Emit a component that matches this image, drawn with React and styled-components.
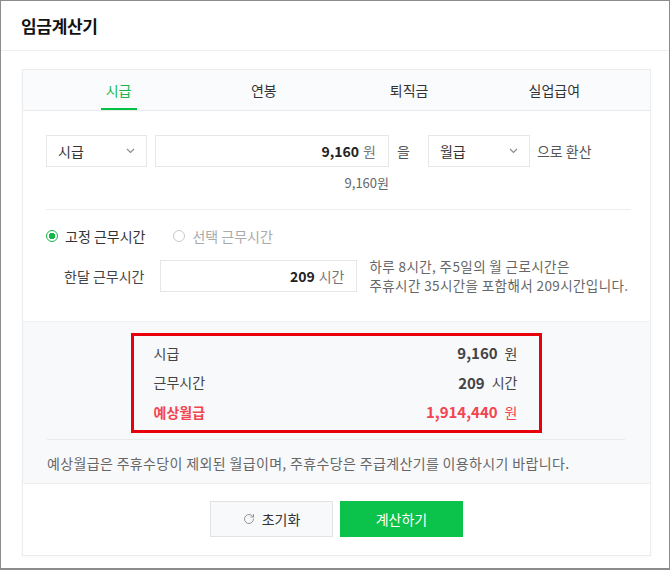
import styled, { createGlobalStyle } from "styled-components";
import { RotateCw } from "lucide-react";

const GlobalStyle = createGlobalStyle`
  * { box-sizing: border-box; }
  body {
    margin: 0;
    background: #ffffff;
    font-family: "Noto Sans CJK KR", "Noto Sans", sans-serif;
    color: #333;
  }
`;

const TABS = ["시급", "연봉", "퇴직금", "실업급여"];

const Chevron = () => (
  <svg width="9" height="6" viewBox="0 0 9 6">
    <path d="M1 1 L4.5 4.5 L8 1" fill="none" stroke="#8a8a8a" strokeWidth="1.1" />
  </svg>
);

export default function App() {
  return (
    <>
      <GlobalStyle />
      <Frame>
        <Header>임금계산기</Header>
        <Content>
          <Card>
            <TabBar>
              {TABS.map((t, i) => (
                <Tab key={t}>
                  <TabLabel $active={i === 0}>{t}</TabLabel>
                </Tab>
              ))}
            </TabBar>

            <FormSection>
              <Row>
                <Select $width={101}>
                  시급 <Chevron />
                </Select>
                <Field $width={234} $ml={8}>
                  <Num>9,160</Num>
                  <Unit>원</Unit>
                </Field>
                <Joiner $ml={8} $mr={18}>을</Joiner>
                <Select $width={102}>
                  월급 <Chevron />
                </Select>
                <Joiner $ml={7}>으로 환산</Joiner>
              </Row>
              <Converted>9,160원</Converted>
              <Divider />
              <RadioRow>
                <Radio $checked>
                  <Dot $checked />
                  고정 근무시간
                </Radio>
                <Radio>
                  <Dot />
                  선택 근무시간
                </Radio>
              </RadioRow>
              <HoursRow>
                <FieldLabel>한달 근무시간</FieldLabel>
                <Field $width={197} $ml={16}>
                  <Num>209</Num>
                  <Unit>시간</Unit>
                </Field>
                <Help>
                  하루 8시간, 주5일의 월 근로시간은
                  <br />
                  주휴시간 35시간을 포함해서 209시간입니다.
                </Help>
              </HoursRow>
            </FormSection>

            <ResultSection>
              <ResultBox>
                <ResultRow>
                  <span>시급</span>
                  <ResultValue>
                    <strong>9,160</strong>
                    <em>원</em>
                  </ResultValue>
                </ResultRow>
                <ResultRow>
                  <span>근무시간</span>
                  <ResultValue>
                    <strong>209</strong>
                    <em>시간</em>
                  </ResultValue>
                </ResultRow>
                <ResultRow $highlight>
                  <span>예상월급</span>
                  <ResultValue>
                    <strong>1,914,440</strong>
                    <em>원</em>
                  </ResultValue>
                </ResultRow>
              </ResultBox>
              <NoteLine />
              <Note>예상월급은 주휴수당이 제외된 월급이며, 주휴수당은 주급계산기를 이용하시기 바랍니다.</Note>
            </ResultSection>

            <Footer>
              <Button>
                <RotateCw size={12} color="#8a8a8a" strokeWidth={1.8} />
                초기화
              </Button>
              <Button $primary>계산하기</Button>
            </Footer>
          </Card>
        </Content>
      </Frame>
    </>
  );
}

const Frame = styled.div`
  width: 670px;
  height: 570px;
  border: 1px solid #8c8c8c;
  border-bottom-width: 2px;
  background: #fff;
`;

const Header = styled.div`
  height: 50px;
  border-bottom: 1px solid #efefef;
  padding-left: 20px;
  display: flex;
  align-items: center;
  font-size: 17px;
  font-weight: 700;
  color: #111;
  letter-spacing: -0.3px;
`;

const Content = styled.div`
  padding: 18px 18px 0 21px;
`;

const Card = styled.div`
  border: 1px solid #ececec;
  box-shadow: 0 1px 3px rgba(0, 0, 0, 0.03);
  background: #fff;
`;

const TabBar = styled.div`
  display: grid;
  grid-template-columns: repeat(4, 1fr);
  padding: 0 23px;
  height: 41px;
  background: #fafbfc;
  border-bottom: 1px solid #ebebeb;
`;

const Tab = styled.div`
  display: flex;
  justify-content: center;
`;

const TabLabel = styled.div`
  padding: 0 5px;
  height: 40px;
  line-height: 40px;
  font-size: 14px;
  color: ${(p) => (p.$active ? "#17b54b" : "#333")};
  border-bottom: 2px solid ${(p) => (p.$active ? "#06c244" : "transparent")};
`;

const FormSection = styled.div`
  padding: 24px 19px 26px 23px;
`;

const Row = styled.div`
  display: flex;
  align-items: center;
  height: 32px;
`;

const Select = styled.div`
  width: ${(p) => p.$width}px;
  height: 32px;
  border: 1px solid #e6e6e6;
  padding: 0 11px 0 11px;
  display: flex;
  align-items: center;
  justify-content: space-between;
  font-size: 14px;
  color: #333;
`;

const Field = styled.div`
  width: ${(p) => p.$width}px;
  margin-left: ${(p) => p.$ml || 0}px;
  flex-shrink: 0;
  height: 32px;
  border: 1px solid #e6e6e6;
  padding: 0 12px;
  display: flex;
  align-items: center;
  justify-content: flex-end;
  gap: 4px;
  font-size: 14px;
`;

const Num = styled.span`
  font-weight: 700;
  color: #222;
`;

const Unit = styled.span`
  color: #777;
`;

const Joiner = styled.span`
  margin-left: ${(p) => p.$ml || 0}px;
  margin-right: ${(p) => p.$mr || 0}px;
  font-size: 14px;
  color: #555;
`;

const Converted = styled.div`
  width: 343px;
  margin-top: 6px;
  line-height: 20px;
  text-align: right;
  font-size: 13px;
  color: #666;
`;

const Divider = styled.div`
  margin-top: 16px;
  height: 1px;
  background: #eeeeee;
`;

const RadioRow = styled.div`
  margin-top: 16px;
  display: flex;
  align-items: center;
  gap: 28px;
  height: 20px;
  line-height: 20px;
`;

const Radio = styled.label`
  display: flex;
  align-items: center;
  gap: 7px;
  font-size: 14px;
  color: ${(p) => (p.$checked ? "#333" : "#aaa")};
`;

const Dot = styled.span`
  width: 12px;
  height: 12px;
  border-radius: 50%;
  border: 1px solid ${(p) => (p.$checked ? "#14b84a" : "#c8c8c8")};
  background: ${(p) => (p.$checked ? "radial-gradient(circle, #14b84a 0 3px, #fff 3.5px)" : "#fff")};
`;

const HoursRow = styled.div`
  margin-top: 11px;
  height: 38px;
  display: flex;
  align-items: center;
  padding-left: 18px;
`;

const FieldLabel = styled.span`
  font-size: 14px;
  color: #444;
`;

const Help = styled.div`
  margin-left: 12px;
  font-size: 13.5px;
  line-height: 19px;
  color: #666;
  letter-spacing: 0.4px;
  white-space: nowrap;
`;

const ResultSection = styled.div`
  background: #f8f9fb;
  border-top: 1px solid #f1f2f4;
  border-bottom: 1px solid #eeeeee;
  padding: 11px 25px 10px 24px;
`;

const ResultBox = styled.div`
  width: 411px;
  margin: 0 auto;
  border: 3px solid #e8000b;
  padding: 2px 21px 3px 20px;
`;

const ResultRow = styled.div`
  height: 29.5px;
  display: flex;
  align-items: center;
  justify-content: space-between;
  font-size: 14px;
  color: ${(p) => (p.$highlight ? "#f2454f" : "#444")};
  font-weight: ${(p) => (p.$highlight ? 700 : 400)};
`;

const ResultValue = styled.span`
  display: flex;
  align-items: center;
  gap: 7px;
  strong {
    font-size: 15px;
    font-weight: 700;
    color: inherit;
  }
  em {
    font-style: normal;
    font-weight: 400;
    font-size: 14px;
  }
`;

const NoteLine = styled.div`
  margin-top: 6px;
  height: 1px;
  background: #e9eaec;
`;

const Note = styled.div`
  margin-top: 13px;
  line-height: 20px;
  font-size: 14px;
  color: #666;
  letter-spacing: 0.35px;
  white-space: nowrap;
`;

const Footer = styled.div`
  padding: 17px 0 18px;
  display: flex;
  justify-content: center;
  gap: 7px;
`;

const Button = styled.button`
  width: 123px;
  height: 36px;
  display: flex;
  align-items: center;
  justify-content: center;
  gap: 7px;
  font-family: inherit;
  font-size: 14px;
  border: 1px solid ${(p) => (p.$primary ? "#0bc24a" : "#e3e3e3")};
  background: ${(p) => (p.$primary ? "#0bc24a" : "#f8f9fb")};
  color: ${(p) => (p.$primary ? "#fff" : "#333")};
  cursor: pointer;
`;
